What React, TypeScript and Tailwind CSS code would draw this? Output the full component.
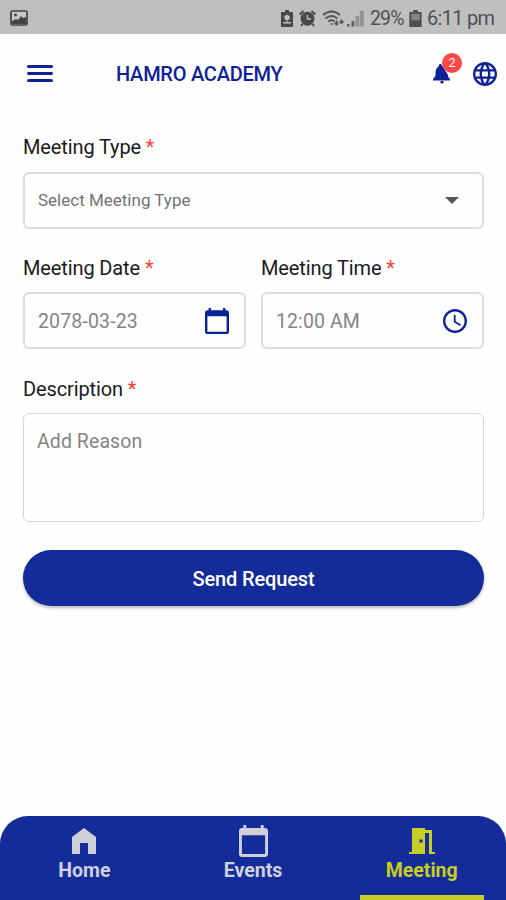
import type { ReactNode } from "react";

function Glyph({ d, className, box = "0 0 24 24" }: { d: string; className: string; box?: string }) {
  return (
    <svg viewBox={box} className={`shrink-0 fill-current ${className}`} preserveAspectRatio="none" aria-hidden="true">
      <path d={d} fillRule="evenodd" />
    </svg>
  );
}

const CALENDAR = "M20 3h-1V1h-2v2H7V1H5v2H4c-1.1 0-2 .9-2 2v16c0 1.1.9 2 2 2h16c1.1 0 2-.9 2-2V5c0-1.1-.9-2-2-2zm0 18H4V8h16v13z";
const CLOCK = "M11.99 2C6.47 2 2 6.48 2 12s4.47 10 9.99 10C17.52 22 22 17.52 22 12S17.52 2 11.99 2zM12 20c-4.42 0-8-3.58-8-8s3.58-8 8-8 8 3.58 8 8-3.58 8-8 8zM12.5 7H11v6l5.25 3.15.75-1.23-4.5-2.67z";
const GLOBE = "M11.99 2C6.47 2 2 6.48 2 12s4.47 10 9.99 10C17.52 22 22 17.52 22 12S17.52 2 11.99 2zm6.93 6h-2.95c-.32-1.25-.78-2.45-1.38-3.56 1.84.63 3.37 1.91 4.33 3.56zM12 4.04c.83 1.2 1.48 2.53 1.91 3.96h-3.82c.43-1.43 1.08-2.76 1.91-3.96zM4.26 14C4.1 13.36 4 12.69 4 12s.1-1.36.26-2h3.38c-.08.66-.14 1.32-.14 2s.06 1.34.14 2H4.26zm.82 2h2.95c.32 1.25.78 2.45 1.38 3.56-1.84-.63-3.37-1.9-4.33-3.56zm2.95-8H5.08c.96-1.66 2.49-2.93 4.33-3.56C8.81 5.55 8.35 6.75 8.03 8zM12 19.96c-.83-1.2-1.48-2.53-1.91-3.96h3.82c-.43 1.43-1.08 2.76-1.91 3.96zM14.34 14H9.66c-.09-.66-.16-1.32-.16-2s.07-1.35.16-2h4.68c.09.65.16 1.32.16 2s-.07 1.34-.16 2zm.25 5.56c.6-1.11 1.06-2.31 1.38-3.56h2.95c-.96 1.65-2.49 2.93-4.33 3.56zM16.36 14c.08-.66.14-1.32.14-2s-.06-1.34-.14-2h3.38c.16.64.26 1.31.26 2s-.1 1.36-.26 2h-3.38z";
const BELL = "M6.500 0h1.500L10 3l5 8v1.500L17 15v1.500H0V15l2.500-3V8.500C2.500 5.500 4 3.500 5.500 2.500zM7.500 17h3v2q-1.500 1-3 0z";

function Label({ children }: { children: ReactNode }) {
  return (
    <div className="h-6 whitespace-nowrap text-[20px] leading-6 tracking-[-0.12px] text-[#1b1b1b]">
      {children} <span className="text-[#f44336]">*</span>
    </div>
  );
}

function StatusBar() {
  return (
    <div className="flex h-[34px] items-center bg-[#bfbfbf] pt-0.5 pr-[11px] pl-[10px] text-[#505050]">
      <svg viewBox="0 0 18 16" className="h-4 w-[18px]" aria-hidden="true">
        <rect x="1" y="1" width="16" height="14" rx="1.5" fill="#c9c9c9" stroke="#444" strokeWidth="1.7" />
        <circle cx="5.5" cy="5" r="1.5" fill="#444" />
        <path d="M2 11l4-2 2 1 3-4 2 2 3-1v7H2z" fill="#444" />
      </svg>
      <div className="ml-auto flex items-center">
        <svg viewBox="0 0 12 17" className="h-[17px] w-3" aria-hidden="true">
          <path d="M4 0h4v2h3q1 0 1 1v13q0 1-1 1H1q-1 0-1-1V3q0-1 1-1h3z" fill="#484848" />
          <path d="M6 4.500l3 2-.5 2.500-2 1.500V12H10v1.500H2V12h3.500v-1.500L3.500 9 3 6.500z" fill="#bdbdbd" />
        </svg>
        <svg viewBox="0 0 17 17" className="ml-[6px] size-[17px]" aria-hidden="true">
          <circle cx="8.500" cy="8.700" r="7" fill="#484848" />
          <path d="M.6 4.500l4-3.500M16.400 4.500l-4-3.500M3.500 14l-1.500 2M13.500 14l1.500 2" stroke="#484848" strokeWidth="2" />
          <path d="M8.500 5v4h3.500" fill="none" stroke="#bdbdbd" strokeWidth="1.400" />
        </svg>
        <svg viewBox="0 0 23 17" className="ml-[6px] h-[17px] w-[23px]" fill="none" stroke="#555" strokeWidth="1.800" aria-hidden="true">
          <path d="M1 5Q9.500-2 18 5M3.500 8.500q6-5 12 0M6.500 11.500q3-2.500 6 0" />
          <path d="M8 13.500h3.500L9.800 15.500z" fill="#555" stroke="none" />
          <path d="M14.500 10.500v5M12.500 13.500h4M19.500 9.500v4.500M17.500 11.800h4" strokeWidth="1.800" />
        </svg>
        <svg viewBox="0 0 17 17" className="ml-[2px] h-[17px] w-[17px]" aria-hidden="true">
          <path d="M0 14h2.500v2.500H0zM4.500 11h2.800v5.500H4.500z" fill="#606060" />
          <path d="M8.500 6h3.500v10.500H8.500zM12.700 1h4v15.500h-4z" fill="#929292" />
        </svg>
        <span className="ml-[6px] w-[35px] whitespace-nowrap pt-px text-[19.500px] leading-6 tracking-[-0.85px]">29%</span>
        <svg viewBox="0 0 13 18" className="ml-[4px] h-[17px] w-[13px]" aria-hidden="true">
          <path d="M4 0h5v2h4v16H0V2h4z" fill="#4e4e4e" />
          <path d="M2 4h9v7H2z" fill="#858585" />
        </svg>
        <span className="ml-[5px] w-[68px] whitespace-nowrap text-[20px] leading-6 tracking-[-0.7px]">6:11 pm</span>
      </div>
    </div>
  );
}

function Header() {
  return (
    <header className="flex h-[79px] items-center pr-[9px] pl-[27px] text-[#0d2199]">
      <div className="flex w-[26px] flex-col gap-[4.500px]">
        <i className="h-[2.600px] rounded-full bg-current" />
        <i className="h-[2.600px] rounded-full bg-current" />
        <i className="h-[2.600px] rounded-full bg-current" />
      </div>
      <h1 className="ml-[63px] whitespace-nowrap text-[20px] leading-6 font-medium tracking-[-0.25px]">HAMRO ACADEMY</h1>
      <div className="relative ml-auto">
        <Glyph d={BELL} box="0 0 17 20" className="mt-px h-[20px] w-[17px]" />
        <span className="absolute -top-[10px] left-[9px] flex size-5 items-center justify-center rounded-full bg-[#f94747] text-[12.500px] text-white">2</span>
      </div>
      <Glyph d={GLOBE} box="2 2 20 20" className="ml-[23px] size-6" />
    </header>
  );
}

function Tab({ label, active = false, children }: { label: string; active?: boolean; children: ReactNode }) {
  return (
    <div className={`flex flex-1 flex-col items-center ${active ? "text-[#c8cc25]" : "text-[#d0d0da]"}`}>
      <div className="mt-[9px] flex h-8 items-center justify-center">{children}</div>
      <span className="mt-[2px] h-6 text-[19.500px] leading-6 font-bold">{label}</span>
      {active && <i className="mt-auto h-[5px] w-[124px] bg-current" />}
    </div>
  );
}

export default function App() {
  return (
    <div className="flex h-[900px] w-[506px] flex-col overflow-hidden bg-[#fefefe] font-['Roboto',sans-serif]">
      <StatusBar />
      <Header />
      <main className="flex flex-col pt-[22px] pr-[22px] pl-[23px]">
        <Label>Meeting Type</Label>
        <div className="mt-[13px] flex h-[57px] items-center justify-between rounded-[6px] border-2 border-[#dcdcdc] pr-[23px] pl-[13px] text-[17px] text-[#737373]">
          Select Meeting Type
          <svg viewBox="0 0 14 7" className="h-[7px] w-3.5" aria-hidden="true"><path d="M0 0h14L7 7z" fill="#555" /></svg>
        </div>
        <div className="mt-[27px] grid grid-cols-2 gap-[15px]">
          <div>
            <Label>Meeting Date</Label>
            <div className="mt-[12px] flex h-[57px] items-center justify-between rounded-[6px] border-2 border-[#dcdcdc] pr-[15px] pl-[13px] text-[19.500px] tracking-[0.15px] text-[#858585]">
              <span className="pt-[3px]">2078-03-23</span>
              <Glyph d={CALENDAR} box="2 1 20 22" className="h-[26px] w-6 text-[#0d2199]" />
            </div>
          </div>
          <div>
            <Label>Meeting Time</Label>
            <div className="mt-[12px] flex h-[57px] items-center justify-between rounded-[6px] border-2 border-[#dcdcdc] pr-[15px] pl-[13px] text-[19.500px] tracking-[0.1px] text-[#858585]">
              <span className="pt-[3px]">12:00 AM</span>
              <Glyph d={CLOCK} box="2 2 20 20" className="size-6 text-[#0d2199]" />
            </div>
          </div>
        </div>
        <div className="mt-[28px]">
          <Label>Description</Label>
        </div>
        <div className="mt-[12px] h-[109px] rounded-[6px] border-[1.500px] border-[#d5d5d5] pt-[16px] pl-[13px] text-[19.500px] leading-6 tracking-[0.08px] text-[#858585]">
          Add Reason
        </div>
        <button className="mt-[28px] h-[56px] rounded-full bg-[#132c9a] pt-0.5 text-[20px] font-medium tracking-[-0.15px] text-white shadow-[0_2px_3px_rgba(0,0,0,0.28)]">
          Send Request
        </button>
      </main>
      <nav className="mt-auto flex h-[84px] rounded-t-[28px] bg-[#132c9a]">
        <Tab label="Home">
          <Glyph d="M0 9L12 0l12 9v17h-8V15H8v11H0z" box="0 0 24 26" className="h-[26px] w-6" />
        </Tab>
        <Tab label="Events">
          <Glyph d={CALENDAR} box="2 1 20 22" className="h-[32px] w-[29px]" />
        </Tab>
        <Tab label="Meeting" active>
          <Glyph d="M3 0h13v2h7v22h3v2h-6V5h-4v21H0v-2h3zM10.500 11.500v3h3v-3z" box="0 0 26 26" className="size-[26px]" />
        </Tab>
      </nav>
    </div>
  );
}
